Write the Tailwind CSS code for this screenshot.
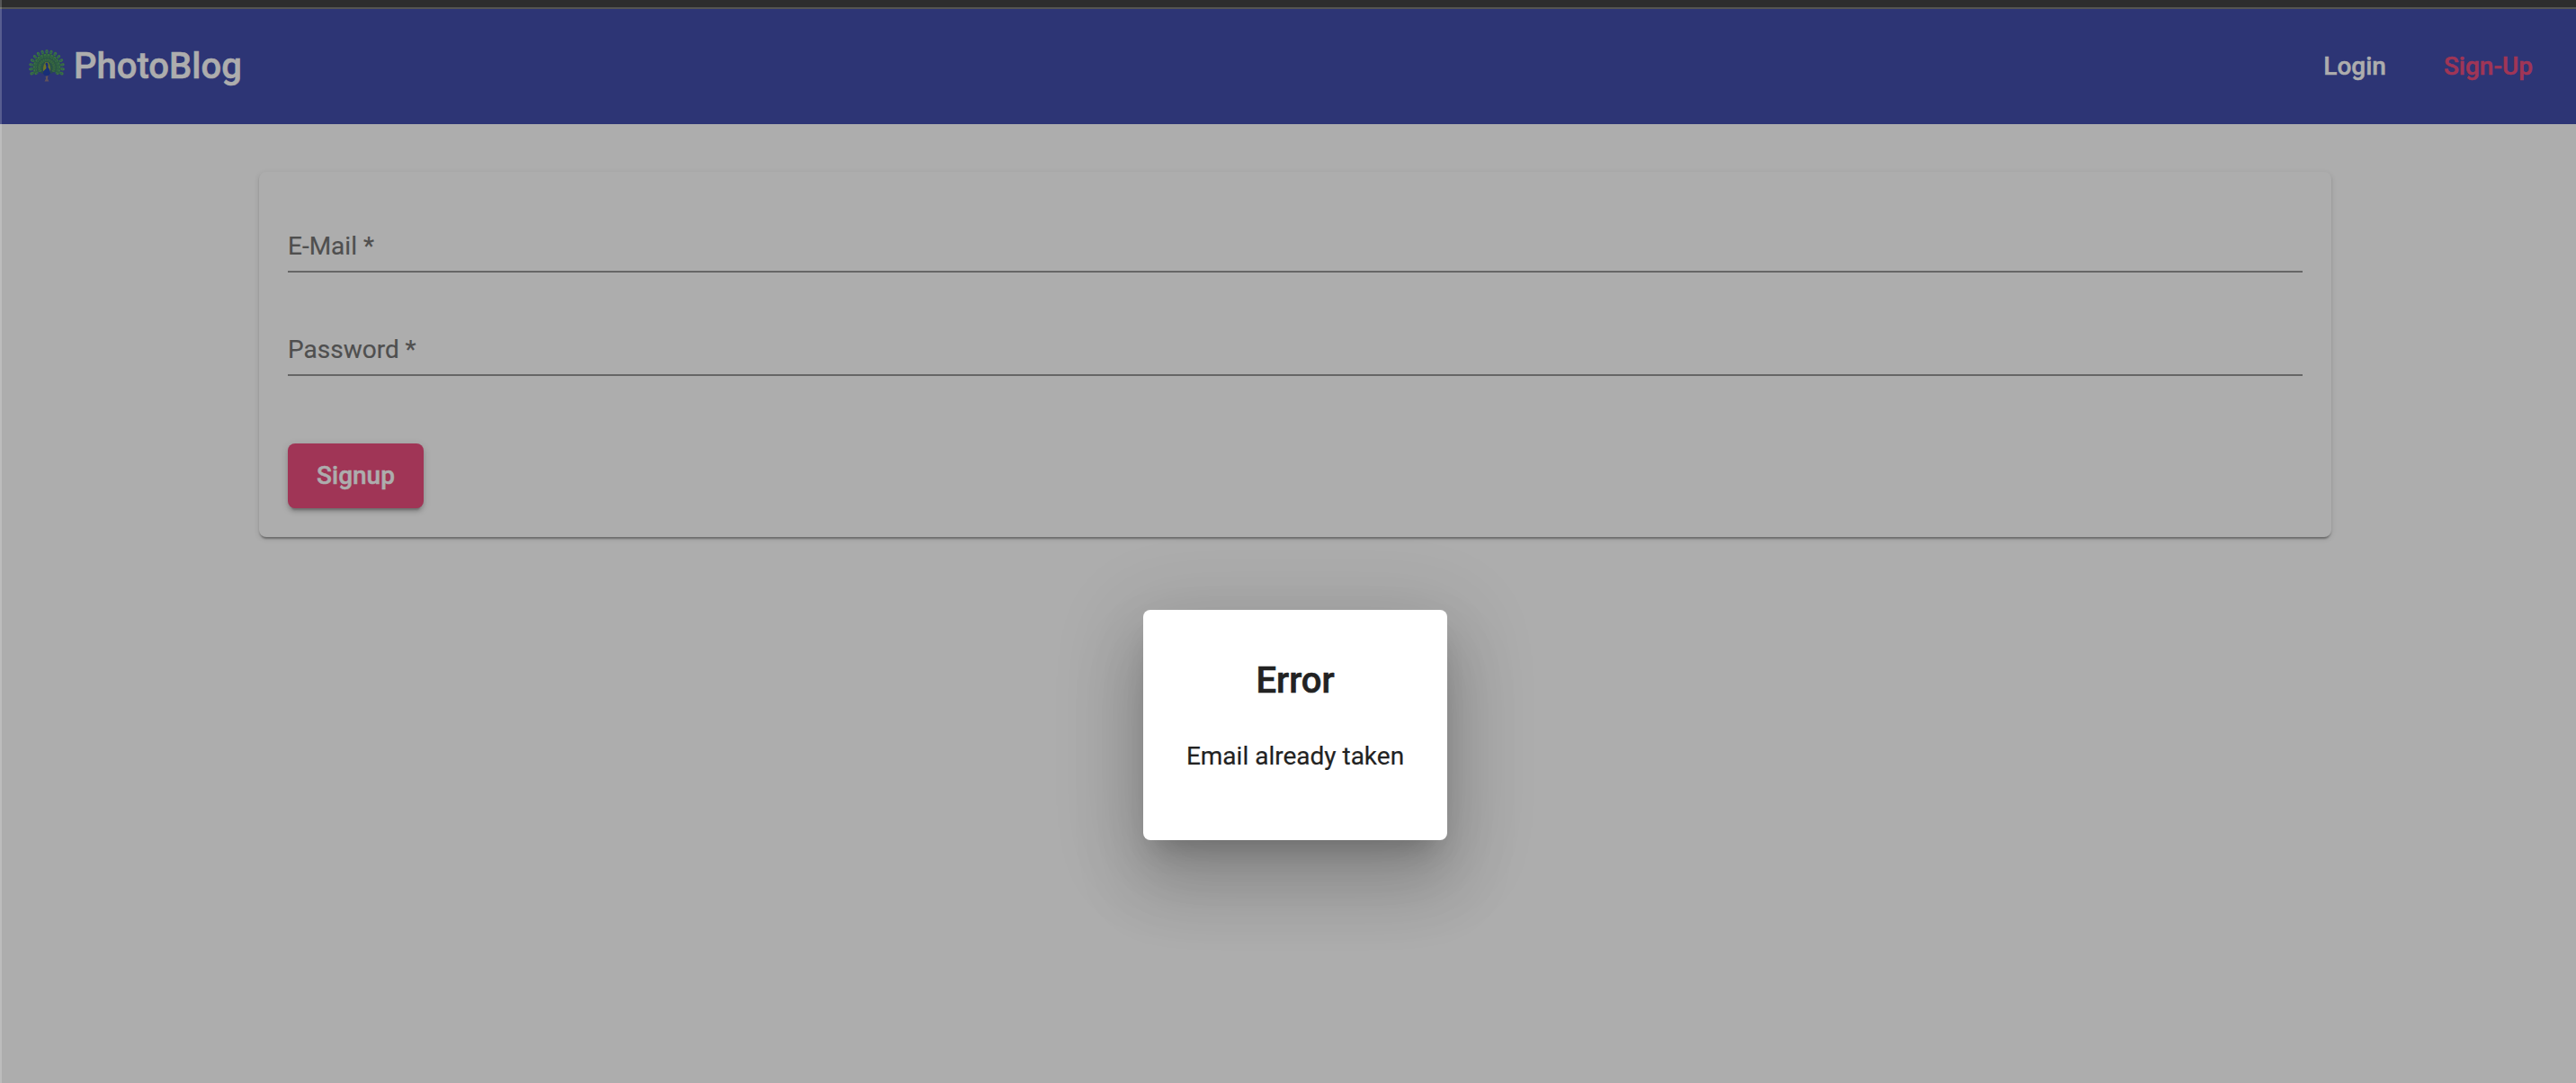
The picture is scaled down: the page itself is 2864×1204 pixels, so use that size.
<!DOCTYPE html>
<html lang="en">
<head>
<meta charset="utf-8">
<title>PhotoBlog</title>
<script src="https://cdn.jsdelivr.net/npm/@tailwindcss/browser@4"></script>
</head>
<body class="relative h-[1204px] overflow-hidden bg-[#adadad] font-[Roboto,sans-serif] text-[#222222]">
<div class="h-2 bg-[#2d2d2d]"></div>
<div class="h-0.5 bg-[#555552]"></div>
<header class="flex h-32 items-center justify-between bg-[#2d3575] pl-8 pr-12">
  <a class="flex items-center gap-2.5 text-[40px] leading-none font-medium text-[#adadad] [-webkit-text-stroke:0.6px]">
    <svg class="mb-[3px] h-[37px] w-10" viewBox="-0.5 0 41 37">
      <defs>
        <g id="feather"><path d="M20 21L18.6 4H21.4Z" fill="#2b5b42"/><ellipse cx="20" cy="2.8" rx="1.7" ry="2.3" fill="#3b7340"/><circle cx="20" cy="3.2" r=".8" fill="#285563"/></g>
        <g id="plume"><ellipse cx="20" cy="7.5" rx="1.3" ry="2.2" fill="#3c7340"/><circle cx="20" cy="8" r=".7" fill="#234d4e"/><ellipse cx="20" cy="12.5" rx=".9" ry="1.8" fill="#39693f"/></g>
      </defs>
      <ellipse cx="20" cy="18" rx="14" ry="10.5" fill="#29494f"/>
      <use href="#feather" transform="rotate(-112 20 21)"/><use href="#feather" transform="rotate(112 20 21)"/>
      <use href="#feather" transform="rotate(-96 20 21)"/><use href="#feather" transform="rotate(96 20 21)"/>
      <use href="#feather" transform="rotate(-80 20 21)"/><use href="#feather" transform="rotate(80 20 21)"/>
      <use href="#feather" transform="rotate(-64 20 21)"/><use href="#feather" transform="rotate(64 20 21)"/>
      <use href="#feather" transform="rotate(-48 20 21)"/><use href="#feather" transform="rotate(48 20 21)"/>
      <use href="#feather" transform="rotate(-32 20 21)"/><use href="#feather" transform="rotate(32 20 21)"/>
      <use href="#feather" transform="rotate(-16 20 21)"/><use href="#feather" transform="rotate(16 20 21)"/>
      <use href="#feather"/>
      <use href="#plume" transform="rotate(-120 20 21)"/><use href="#plume" transform="rotate(120 20 21)"/>
      <use href="#plume" transform="rotate(-104 20 21)"/><use href="#plume" transform="rotate(104 20 21)"/>
      <use href="#plume" transform="rotate(-88 20 21)"/><use href="#plume" transform="rotate(88 20 21)"/>
      <use href="#plume" transform="rotate(-72 20 21)"/><use href="#plume" transform="rotate(72 20 21)"/>
      <use href="#plume" transform="rotate(-56 20 21)"/><use href="#plume" transform="rotate(56 20 21)"/>
      <use href="#plume" transform="rotate(-40 20 21)"/><use href="#plume" transform="rotate(40 20 21)"/>
      <use href="#plume" transform="rotate(-24 20 21)"/><use href="#plume" transform="rotate(24 20 21)"/>
      <use href="#plume" transform="rotate(-8 20 21)"/><use href="#plume" transform="rotate(8 20 21)"/>
      <path d="M18.5 15Q15 20 16 27H24Q25 20 21.5 15Z" fill="#6f7427"/>
      <path d="M18.5 30H21.5L21 34L22.5 37H17.5L19 34Z" fill="#62535b"/>
      <path d="M18.3 17Q19 15 20.5 15.5Q22 17 21.5 21Q24.5 24 24 28Q22 31.5 18 30.5Q15 28.5 16 25.5L19.5 22Q20 19.5 18.3 17Z" fill="#182f78"/>
    </svg>
    <span>PhotoBlog</span>
  </a>
  <nav class="flex items-center gap-16 pb-px text-[28px] leading-none font-medium [-webkit-text-stroke:0.5px]">
    <a class="text-[#adadad]">Login</a>
    <a class="text-[#a03556]">Sign-Up</a>
  </nav>
</header>
<main class="mt-[53px] ml-72 h-[406px] w-[2304px] rounded-lg bg-[#adadad] px-8 shadow-[0_4px_2px_-2px_rgba(0,0,0,0.2),0_2px_2px_0_rgba(0,0,0,0.14),0_2px_6px_0_rgba(0,0,0,0.12)]">
  <form>
    <div class="flex h-28 items-end border-b-2 border-[#666666] pb-[9px] text-[28px] leading-9 text-[#4f4f4f] [-webkit-text-stroke:0.2px]"><label>E-Mail *</label></div>
    <div class="mt-[3px] flex h-28 items-end border-b-2 border-[#666666] pb-[9px] text-[28px] leading-9 text-[#4f4f4f] [-webkit-text-stroke:0.2px]"><label>Password *</label></div>
    <button type="button" class="mt-[75px] flex h-18 w-[151px] items-center justify-center rounded-lg bg-[#a03556] pb-px text-[28px] leading-none font-medium text-[#adadad] shadow-[0_6px_2px_-4px_rgba(0,0,0,0.2),0_4px_4px_0_rgba(0,0,0,0.14),0_2px_10px_0_rgba(0,0,0,0.12)] [-webkit-text-stroke:0.5px]">Signup</button>
  </form>
</main>
<section role="dialog" class="absolute top-[678px] left-[1271px] flex h-64 w-[338px] flex-col items-center rounded-lg bg-white pt-[55px] shadow-[0_22px_30px_-14px_rgba(0,0,0,0.2),0_48px_76px_6px_rgba(0,0,0,0.14),0_18px_92px_16px_rgba(0,0,0,0.12)]">
  <h1 class="text-[40px] leading-12 font-medium [-webkit-text-stroke:0.6px]">Error</h1>
  <p class="mt-[42px] text-[28px] leading-9 [-webkit-text-stroke:0.2px]">Email already taken</p>
</section>
<div class="absolute inset-y-0 left-0 w-0.5 bg-white/20"></div>
</body>
</html>
